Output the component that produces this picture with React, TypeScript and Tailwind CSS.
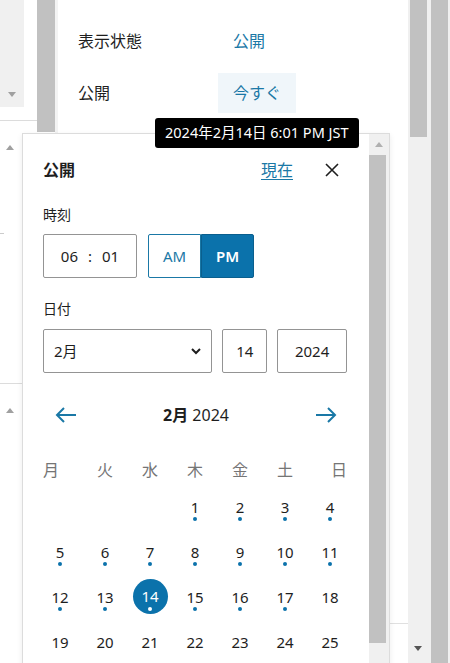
const WEEK = ['月', '火', '水', '木', '金', '土', '日'];

// Feb 2024 starts on a Thursday (Monday-first week); only the visible rows
const CELLS: (number | null)[] = [
  null,
  null,
  null,
  ...Array.from({ length: 25 }, (_, i) => i + 1),
];

function TriUp({ color = 'border-b-[#a0a0a0]' }: { color?: string }) {
  return (
    <div
      className={`h-0 w-0 border-x-[4px] border-b-[5px] border-x-transparent ${color}`}
    />
  );
}

function TriDown() {
  return (
    <div className="h-0 w-0 border-x-[4px] border-t-[5px] border-x-transparent border-t-[#a0a0a0]" />
  );
}

function Arrow({ dir }: { dir: 'left' | 'right' }) {
  return (
    <svg width="22" height="16" viewBox="0 0 22 16" fill="none">
      {dir === 'left' ? (
        <path d="M21 8H2M9 1L2 8l7 7" stroke="#1a78a6" strokeWidth="2" />
      ) : (
        <path d="M1 8h19M13 1l7 7-7 7" stroke="#1a78a6" strokeWidth="2" />
      )}
    </svg>
  );
}

function DayCell({ day }: { day: number | null }) {
  if (day === null) return <div className="h-[45px]" />;
  if (day === 14) {
    return (
      <div className="flex h-[45px] justify-center pt-[3px]">
        <div className="flex h-[35px] w-[35px] flex-col items-center rounded-full bg-[#0b72ab] pt-[8px] text-white">
          <span className="text-[15px] leading-[18px]">14</span>
          <span className="mt-[2px] h-[4px] w-[4px] rounded-full bg-white" />
        </div>
      </div>
    );
  }
  return (
    <div className="flex h-[45px] flex-col items-center pt-[12px]">
      <span className="text-[15px] leading-[18px] text-[#1e1e1e]">{day}</span>
      {day <= 17 && (
        <span className="mt-[1px] h-[4px] w-[4px] rounded-full bg-[#0b72ab]" />
      )}
    </div>
  );
}

export default function App() {
  return (
    <div className="relative flex h-[663px] w-[450px] overflow-hidden bg-white font-['Noto_Sans','Noto_Sans_CJK_JP',sans-serif] text-[#1e1e1e]">
      {/* left pane */}
      <div className="flex w-[37px] flex-col">
        <div className="flex h-[107px] w-[24px] flex-col items-center justify-end bg-[#f0f0f0] pb-[10px]">
          <TriDown />
        </div>
        <div className="h-[13px]" />
        <div className="h-px bg-[#dcdcdc]" />
        <div className="flex w-[20px] justify-center pt-[24px]">
          <TriUp />
        </div>
        <div className="mt-[83px] h-px w-[4px] bg-[#cccccc]" />
        <div className="mt-[149px] h-px w-[22px] bg-[#dcdcdc]" />
        <div className="flex w-[20px] justify-center pt-[24px]">
          <TriUp />
        </div>
      </div>

      {/* left pane scrollbar */}
      <div className="w-[18px]">
        <div className="h-[132px] bg-[#c1c1c1]" />
      </div>
      <div className="w-[3px] bg-[#f3f3f3]" />

      {/* sidebar panel */}
      <div className="flex flex-1 flex-col pl-[20px]">
        <div className="mt-[21px] flex h-[40px] items-center text-[16px]">
          <span className="w-[140px]">表示状態</span>
          <span className="pl-[15px] text-[#1a78a6]">公開</span>
        </div>
        <div className="mt-[12px] flex h-[40px] items-center text-[16px]">
          <span className="w-[140px]">公開</span>
          <span className="flex h-[40px] items-center bg-[#f0f6fa] px-[15px] text-[#1a78a6]">
            今すぐ
          </span>
        </div>
        <div className="-ml-[20px] mt-auto h-[40px] border-t border-[#e0e0e0]" />
      </div>

      {/* sidebar scrollbar */}
      <div className="flex w-[23px] flex-col bg-[#f0f0f0]">
        <div className="ml-[2px] h-[137px] w-[17px] bg-[#c1c1c1]" />
        <div className="mt-auto flex w-[20px] justify-center pb-[12px]">
          <div className="h-0 w-0 border-x-[4px] border-t-[5px] border-x-transparent border-t-[#555555]" />
        </div>
      </div>
      <div className="w-[17px] bg-[#c1c1c1]" />
      <div className="w-[2px] bg-[#f0f0f0]" />

      {/* date popover */}
      <div className="absolute left-[22px] top-[133px] flex h-[560px] w-[368px] border border-[#dcdcdc] bg-white shadow-[0_2px_6px_rgba(0,0,0,0.08)]">
        <div className="min-w-0 flex-1 pl-[20px] pr-[22px] pt-[24px]">
          {/* header */}
          <div className="flex h-[24px] items-center">
            <span className="text-[16px] font-bold">公開</span>
            <span className="ml-auto text-[16px] text-[#1a78a6] underline underline-offset-[3px]">
              現在
            </span>
            <button className="ml-[24px] flex h-[24px] w-[30px] items-center justify-center">
              <svg width="14" height="14" viewBox="0 0 14 14">
                <path d="M1 1l12 12M13 1L1 13" stroke="#1e1e1e" strokeWidth="1.6" />
              </svg>
            </button>
          </div>

          {/* time */}
          <div className="mt-[24px] text-[14px] leading-[18px]">時刻</div>
          <div className="mt-[10px] flex h-[44px]">
            <div className="flex w-[94px] items-center justify-center gap-[10px] rounded-[2px] border border-[#949494] text-[15px]">
              <span>06</span>
              <span>:</span>
              <span>01</span>
            </div>
            <div className="ml-[11px] flex">
              <div className="flex w-[53px] items-center justify-center rounded-l-[2px] border border-[#1a78a6] text-[15px] text-[#1a78a6]">
                AM
              </div>
              <div className="flex w-[53px] items-center justify-center rounded-r-[2px] border border-[#0a5f8e] bg-[#0b72ab] text-[15px] font-semibold text-white">
                PM
              </div>
            </div>
          </div>

          {/* date */}
          <div className="mt-[22px] text-[14px] leading-[18px]">日付</div>
          <div className="mt-[11px] flex h-[44px] gap-[10px] text-[15px]">
            <div className="flex w-[170px] items-center rounded-[2px] border border-[#949494] pl-[10px] pr-[10px]">
              <span>2月</span>
              <svg className="ml-auto" width="10" height="7" viewBox="0 0 10 7">
                <path d="M1 1l4 4 4-4" stroke="#1e1e1e" strokeWidth="2" fill="none" />
              </svg>
            </div>
            <div className="flex w-[45px] items-center justify-center rounded-[2px] border border-[#949494]">
              14
            </div>
            <div className="flex w-[70px] items-center justify-center rounded-[2px] border border-[#949494]">
              2024
            </div>
          </div>

          {/* month nav */}
          <div className="mt-[26px] flex h-[32px] items-center">
            <button className="flex h-[32px] w-[46px] items-center justify-center">
              <Arrow dir="left" />
            </button>
            <div className="flex-1 text-center text-[16px]">
              <span className="font-bold">2月</span> 2024
            </div>
            <button className="-mr-[2px] flex h-[32px] w-[46px] items-center justify-center">
              <Arrow dir="right" />
            </button>
          </div>

          {/* weekdays */}
          <div className="-mx-[5.5px] mt-[27px] grid h-[24px] grid-cols-7 items-center text-[16px] text-[#757575]">
            {WEEK.map((w, i) => (
              <span
                key={w}
                className={
                  i === 0
                    ? 'pl-[5.5px] text-left'
                    : i === 6
                      ? 'pr-[5.5px] text-right'
                      : 'text-center'
                }
              >
                {w}
              </span>
            ))}
          </div>

          {/* days */}
          <div className="-mx-[5.5px] mt-[4px] grid grid-cols-7">
            {CELLS.map((d, i) => (
              <DayCell key={i} day={d} />
            ))}
          </div>
        </div>

        {/* popover scrollbar */}
        <div className="flex w-[20px] flex-col bg-[#f0f0f0]">
          <div className="flex h-[21px] items-center justify-center">
            <TriUp color="border-b-[#b0b0b0]" />
          </div>
          <div className="mr-[3px] h-[488px] bg-[#c1c1c1]" />
        </div>
      </div>

      {/* tooltip */}
      <div className="absolute left-[155px] top-[118px] flex h-[30px] items-center rounded-[3px] bg-black px-[10px] text-[14.5px] text-white">
        2024年2月14日 6:01 PM JST
      </div>
    </div>
  );
}
